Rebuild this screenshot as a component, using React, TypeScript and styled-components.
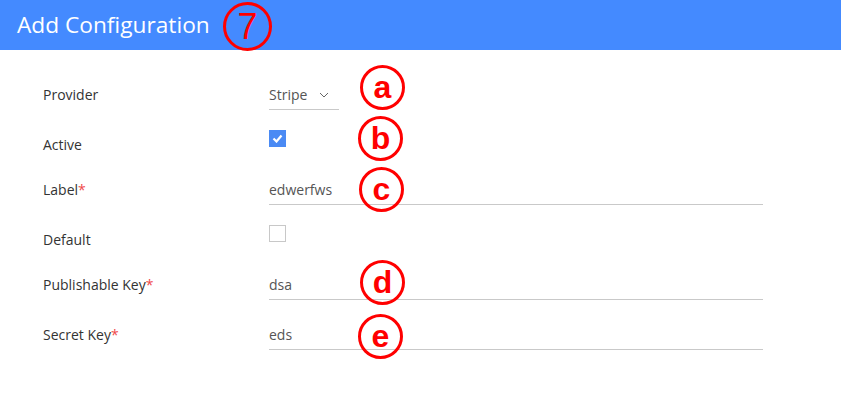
import React from "react";
import styled, { createGlobalStyle } from "styled-components";

const Global = createGlobalStyle`
  html, body { margin: 0; padding: 0; background: #fff; }
  body { font-family: "Open Sans", "Liberation Sans", sans-serif; }
  * { box-sizing: border-box; }
`;

const Page = styled.div`
  position: relative;
  width: 841px;
  height: 416px;
  background: #fff;
  overflow: hidden;
`;

const Header = styled.header`
  height: 50px;
  background: #448aff;
  display: flex;
  align-items: center;
  padding-left: 17px;
`;

const Title = styled.h1`
  margin: 0;
  font-family: "Open Sans", sans-serif;
  font-weight: 400;
  font-size: 22.7px;
  color: #fff;
  line-height: 30px;
`;

const Form = styled.div`
  padding-top: 16px;
  padding-left: 43px;
  display: flex;
  flex-direction: column;
`;

const Row = styled.div<{ $tall?: boolean }>`
  display: grid;
  grid-template-columns: 226px 494px;
  align-items: start;
  height: ${(p) => (p.$tall ? 50 : 45)}px;
`;

const Label = styled.div`
  padding-top: 19px;
  font-size: 14px;
  line-height: 20px;
  color: #333;
`;

const Req = styled.span`
  color: #f0494a;
`;

const Field = styled.div<{ $w?: number }>`
  margin-top: 12px;
  width: ${(p) => (p.$w ? `${p.$w}px` : "100%")};
  padding: 7px 0 4px 0;
  border-bottom: 1px solid #c9c9c9;
  font-size: 14px;
  line-height: 20px;
  color: #555;
  display: flex;
  align-items: center;
  gap: 12px;
`;

const Box = styled.div<{ $on?: boolean }>`
  margin-top: 14px;
  width: 17px;
  height: 17px;
  border: 1px solid ${(p) => (p.$on ? "#4a8af4" : "#c8c8c8")};
  background: ${(p) => (p.$on ? "#4a8af4" : "#fff")};
  display: flex;
  align-items: center;
  justify-content: center;
`;

const Mark = styled.span<{ $x: number; $y: number; $d?: number }>`
  position: absolute;
  left: ${(p) => p.$x}px;
  top: ${(p) => p.$y}px;
  width: ${(p) => p.$d ?? 45}px;
  height: ${(p) => p.$d ?? 45}px;
  border: 3px solid #ff0000;
  border-radius: 50%;
  display: flex;
  align-items: center;
  justify-content: center;
  color: #ff0000;
  font-family: "Liberation Sans", Arial, sans-serif;
  font-weight: 700;
  font-size: 32px;
  line-height: 1;
  padding-bottom: 2px;
`;

const Seven = styled(Mark)`
  font-weight: 400;
  font-size: 36px;
  padding-bottom: 0;
`;

const Chevron = () => (
  <svg width="10" height="6" viewBox="0 0 10 6">
    <path d="M1 1l4 4 4-4" fill="none" stroke="#666" strokeWidth="1" />
  </svg>
);

const Check = () => (
  <svg width="11" height="9" viewBox="0 0 11 9">
    <path d="M1.5 4.5l3 3L9.5 1.5" fill="none" stroke="#fff" strokeWidth="2.2" />
  </svg>
);

export default function App() {
  return (
    <Page>
      <Global />
      <Header>
        <Title>Add Configuration</Title>
      </Header>
      <Form>
        <Row $tall>
          <Label>Provider</Label>
          <Field $w={70}>
            Stripe <Chevron />
          </Field>
        </Row>
        <Row>
          <Label>Active</Label>
          <Box $on>
            <Check />
          </Box>
        </Row>
        <Row $tall>
          <Label>
            Label<Req>*</Req>
          </Label>
          <Field>edwerfws</Field>
        </Row>
        <Row>
          <Label>Default</Label>
          <Box />
        </Row>
        <Row $tall>
          <Label>
            Publishable Key<Req>*</Req>
          </Label>
          <Field>dsa</Field>
        </Row>
        <Row $tall>
          <Label>
            Secret Key<Req>*</Req>
          </Label>
          <Field>eds</Field>
        </Row>
      </Form>
      <Seven $x={223} $y={2} $d={49}>7</Seven>
      <Mark $x={360} $y={65}>a</Mark>
      <Mark $x={358} $y={116}>b</Mark>
      <Mark $x={359} $y={167}>c</Mark>
      <Mark $x={360} $y={260}>d</Mark>
      <Mark $x={358} $y={314}>e</Mark>
    </Page>
  );
}
